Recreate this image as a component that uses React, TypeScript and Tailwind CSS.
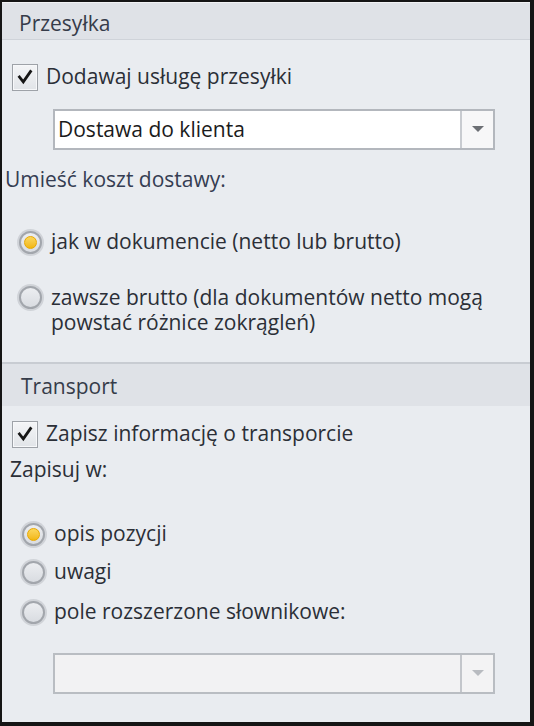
import React from "react";

const font = { fontFamily: '"Open Sans", "Noto Sans", sans-serif' };

function Check() {
  return (
    <div className="w-[26px] h-[27px] border border-[#9ea2a8] bg-gradient-to-b from-[#f4f5f7] to-[#e1e4e8] flex items-center justify-center shadow-[inset_0_0_0_1px_#f7f8fa]">
      <svg width="16" height="16" viewBox="0 0 16 16">
        <path d="M2.5 8 L6.3 12.8 L13.5 2.5" fill="none" stroke="#161616" strokeWidth="2.8" strokeLinecap="square" />
      </svg>
    </div>
  );
}

function Radio({ on }: { on?: boolean }) {
  return (
    <div className="w-[27px] h-[27px] rounded-full bg-[#d0d3d8] flex items-center justify-center">
      <div className="w-[23px] h-[23px] rounded-full border-[2px] border-[#a2a6ac] bg-gradient-to-b from-[#eceef1] to-[#d9dce1] flex items-center justify-center">
        {on ? (
          <div className="w-[13px] h-[13px] rounded-full bg-gradient-to-b from-[#fbd75a] to-[#f2b705] border border-[#e9a800]" />
        ) : null}
      </div>
    </div>
  );
}

function Arrow({ color }: { color: string }) {
  return (
    <svg width="12" height="7" viewBox="0 0 12 7">
      <path d="M0 0 H12 L6 6 Z" fill={color} />
    </svg>
  );
}

function Combo({ text, disabled }: { text?: string; disabled?: boolean }) {
  return (
    <div
      className={`ml-[51px] w-[442px] h-[41px] border-[2px] flex ${
        disabled ? "border-[#b9bdc2] bg-[#f2f2f3]" : "border-[#b3b7bd] bg-white"
      }`}
    >
      <div className="flex-1 flex items-center pl-[3px] text-[21px] text-[#1b1b1b]">{text}</div>
      <div
        className={`w-[33px] border-l-[2px] flex items-center justify-center ${
          disabled ? "border-[#c3c6cb] bg-[#f3f3f4]" : "border-[#c8cbd0] bg-[#f7f7f8]"
        }`}
      >
        <Arrow color={disabled ? "#b8bbc0" : "#6c6f74"} />
      </div>
    </div>
  );
}

export default function App() {
  return (
    <div className="w-[534px] h-[726px] bg-[#151515] pt-[2px] pl-[2px] pr-[4px] pb-[4px]" style={font}>
      <div className="h-full bg-[#e9ecf0] flex flex-col text-[21px] text-[#2b2f37]">
        <div className="h-[38px] bg-[#dfe2e7] border-t border-[#f1f2f4] border-b border-b-[#cfd3d9] flex items-center pt-[5px] pl-[17px] text-[#363c4a]">
          Przesyłka
        </div>
        <div className="mt-[23px] ml-[10px] h-[28px] flex items-center gap-[8px]">
          <Check />
          <span>Dodawaj usługę przesyłki</span>
        </div>
        <div className="mt-[18px]">
          <Combo text="Dostawa do klienta" />
        </div>
        <div className="mt-[17px] h-[26px] flex items-center pl-[3px] text-[#353d52]">Umieść koszt dostawy:</div>
        <div className="mt-[36px] ml-[15px] h-[26px] flex items-center gap-[7px]">
          <Radio on />
          <span>jak w dokumencie (netto lub brutto)</span>
        </div>
        <div className="mt-[30px] ml-[15px] flex items-start gap-[7px]">
          <div className="h-[25px] flex items-center">
            <Radio />
          </div>
          <div className="leading-[25px]">
            zawsze brutto (dla dokumentów netto mogą
            <br />
            powstać różnice zokrągleń)
          </div>
        </div>
        <div className="mt-[27px] h-[44px] bg-[#dfe2e7] border-t-[2px] border-[#c8ccd2] flex items-center pt-[3px] pl-[19px] text-[#363c4a]">
          Transport
        </div>
        <div className="mt-[14px] ml-[10px] h-[28px] flex items-center gap-[8px]">
          <Check />
          <span>Zapisz informację o transporcie</span>
        </div>
        <div className="mt-[9px] h-[26px] flex items-center pl-[8px]">Zapisuj w:</div>
        <div className="mt-[38px] ml-[18px] h-[26px] flex items-center gap-[7px]">
          <Radio on />
          <span>opis pozycji</span>
        </div>
        <div className="mt-[12px] ml-[18px] h-[26px] flex items-center gap-[7px]">
          <Radio />
          <span>uwagi</span>
        </div>
        <div className="mt-[14px] ml-[18px] h-[26px] flex items-center gap-[7px]">
          <Radio />
          <span>pole rozszerzone słownikowe:</span>
        </div>
        <div className="mt-[28px]">
          <Combo disabled />
        </div>
      </div>
    </div>
  );
}
